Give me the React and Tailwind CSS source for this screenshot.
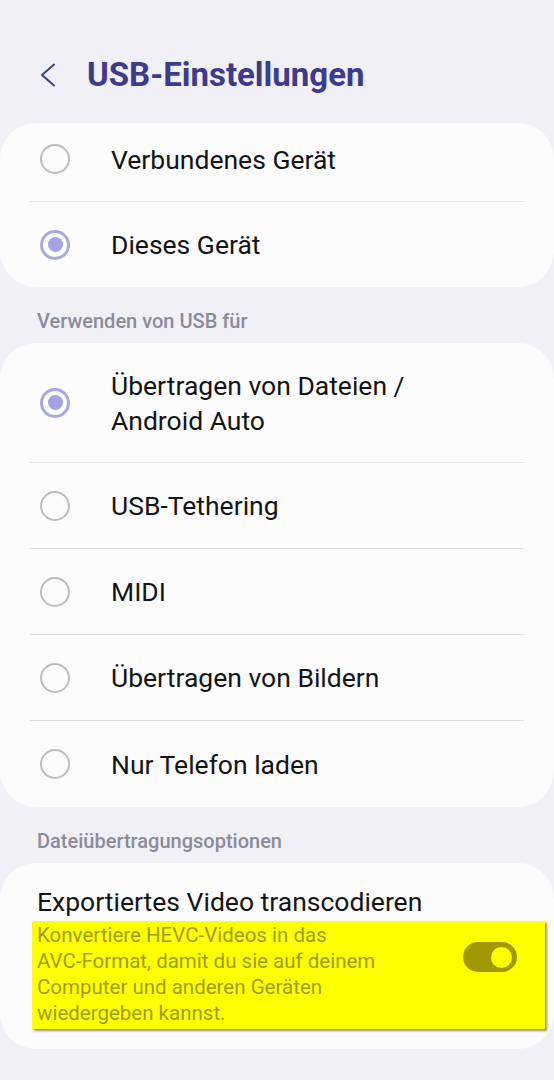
import React from 'react';

const font = { fontFamily: 'Roboto, "Noto Sans", sans-serif' };

const Radio = ({ checked }) =>
  checked ? (
    <span className="flex h-[30px] w-[30px] shrink-0 items-center justify-center rounded-full border-[3px] border-[#a9a9e2]">
      <span className="h-[15px] w-[15px] rounded-full bg-[#a3a3e4]" />
    </span>
  ) : (
    <span className="h-[30px] w-[30px] shrink-0 rounded-full border-2 border-[#bdbdbd]" />
  );

const Row = ({ label, checked, height = 'h-[86px]', last }) => (
  <div className="px-[30px]">
    <div
      className={`flex items-center gap-[41px] pl-[10px] ${height} ${
        last ? '' : 'border-b border-[#e2e2e6]'
      }`}
    >
      <Radio checked={checked} />
      <span className="text-[26.5px] leading-[35px] text-[#141414]">{label}</span>
    </div>
  </div>
);

const Card = ({ children, className = '' }) => (
  <div className={`rounded-[36px] bg-[#fcfcfd] ${className}`}>{children}</div>
);

const SectionLabel = ({ children }) => (
  <div className="px-[37px] pt-[22px] pb-[10px] text-[20px] font-medium leading-[24px] text-[#8c8b9a]">
    {children}
  </div>
);

export default function App() {
  return (
    <div className="min-h-[1080px] w-[554px] bg-[#f0f0f6]" style={font}>
      <div className="flex h-[123px] items-center gap-[31px] pl-[40px] pt-[27px]">
        <svg width="16" height="24" viewBox="0 0 16 24" fill="none" stroke="#3e3d8f" strokeWidth="2" strokeLinecap="round" strokeLinejoin="round">
          <path d="M14 1.5 L2 12 L14 22.5" />
        </svg>
        <h1 className="text-[33px] font-bold leading-[40px] text-[#3c3b8e]">USB-Einstellungen</h1>
      </div>

      <Card>
        <Row label="Verbundenes Gerät" height="h-[79px] pb-[6px]" />
        <Row label="Dieses Gerät" checked last height="h-[85px]" />
      </Card>

      <SectionLabel>Verwenden von USB für</SectionLabel>

      <Card>
        <Row
          label={
            <>
              Übertragen von Dateien /
              <br />
              Android Auto
            </>
          }
          checked
          height="h-[120px]"
        />
        <Row label="USB-Tethering" />
        <Row label="MIDI" />
        <Row label="Übertragen von Bildern" />
        <Row label="Nur Telefon laden" last />
      </Card>

      <SectionLabel>Dateiübertragungsoptionen</SectionLabel>

      <Card className="pt-[22px] pb-[20px]">
        <div className="px-[37px] text-[26.5px] leading-[34px] text-[#141414]">
          Exportiertes Video transcodieren
        </div>
        <div className="ml-[32px] mr-[9px] mt-[2px] flex items-start justify-between bg-[#ffff00] pl-[5px] pr-[28px] pt-[1px] pb-[3px] shadow-[2px_2px_2px_rgba(60,60,0,0.55)]">
          <p className="text-[20.5px] leading-[26px] text-[#a09c10]">
            Konvertiere HEVC-Videos in das
            <br />
            AVC-Format, damit du sie auf deinem
            <br />
            Computer und anderen Geräten
            <br />
            wiedergeben kannst.
          </p>
          <div className="mt-[20px] flex h-[30px] w-[54px] items-center justify-end rounded-full bg-[#a09a00] p-[3px]">
            <span className="h-[25px] w-[25px] rounded-full border-[2px] border-[#a09a00] bg-[#ffff00]" />
          </div>
        </div>
      </Card>
    </div>
  );
}
